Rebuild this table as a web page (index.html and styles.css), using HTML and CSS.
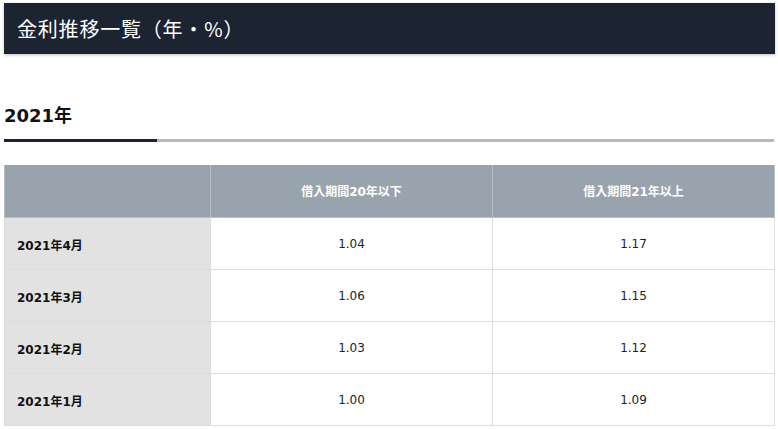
FILE: index.html
```html
<!DOCTYPE html>
<html lang="ja">
<head>
<meta charset="utf-8">
<link rel="stylesheet" href="styles.css">
</head>
<body>
<div class="page">
  <header class="banner"><h1 class="banner-title">金利推移一覧（年・%）</h1></header>
  <section class="year">
    <h2 class="year-title">2021年</h2>
    <div class="year-rule"><span class="year-rule-accent"></span></div>
    <table class="rates">
      <thead>
        <tr><th class="corner"></th><th>借入期間20年以下</th><th>借入期間21年以上</th></tr>
      </thead>
      <tbody>
        <tr><th class="month">2021年4月</th><td>1.04</td><td>1.17</td></tr>
        <tr><th class="month">2021年3月</th><td>1.06</td><td>1.15</td></tr>
        <tr><th class="month">2021年2月</th><td>1.03</td><td>1.12</td></tr>
        <tr><th class="month">2021年1月</th><td>1.00</td><td>1.09</td></tr>
      </tbody>
    </table>
  </section>
</div>
</body>
</html>
```

FILE: styles.css
```css
* { box-sizing: border-box; }
html, body { margin: 0; padding: 0; background: #fff; }
body { font-family: "DejaVu Sans", "Noto Sans CJK JP", sans-serif; color: #111; }
.page { padding: 3px 3px 0 4px; }
.banner {
  background: #1c2431;
  height: 51px;
  display: flex;
  align-items: center;
  padding-left: 13px;
  box-shadow: 0 1px 3px rgba(0,0,0,0.25);
}
.banner-title {
  margin: 0;
  color: #fff;
  font-family: "Noto Sans CJK JP", sans-serif;
  font-weight: 400;
  font-size: 20px;
  letter-spacing: 0.8px;
}
.year { padding-top: 49px; }
.year-title {
  margin: 0;
  font-family: "DejaVu Sans", "Noto Sans CJK JP", sans-serif;
  font-weight: 700;
  font-size: 18px;
  line-height: 26px;
  color: #111;
}
.year-rule {
  margin-top: 10px;
  height: 3px;
  background: #b9b9b9;
  display: flex;
  margin-right: 1px;
}
.year-rule-accent { width: 153px; background: #1c2431; }
.rates {
  margin-top: 23px;
  width: 100%;
  border-collapse: collapse;
  table-layout: fixed;
}
.rates th, .rates td {
  height: 52px;
  border: 1px solid #dddddd;
  font-size: 12px;
  padding-top: 3px;
}
.rates thead th {
  background: #99a3ad;
  color: #fff;
  font-weight: 700;
  text-align: center;
  border-color: #b7bec5;
  border-top: none;
  padding-top: 1px;
}
.rates .corner { width: 206px; }
.rates thead th:nth-child(2) { width: 282px; }
.rates .month {
  background: #e2e2e2;
  text-align: left;
  padding-left: 12px;
  font-weight: 700;
  color: #111;
}
.rates td { text-align: center; color: #222; }
```
